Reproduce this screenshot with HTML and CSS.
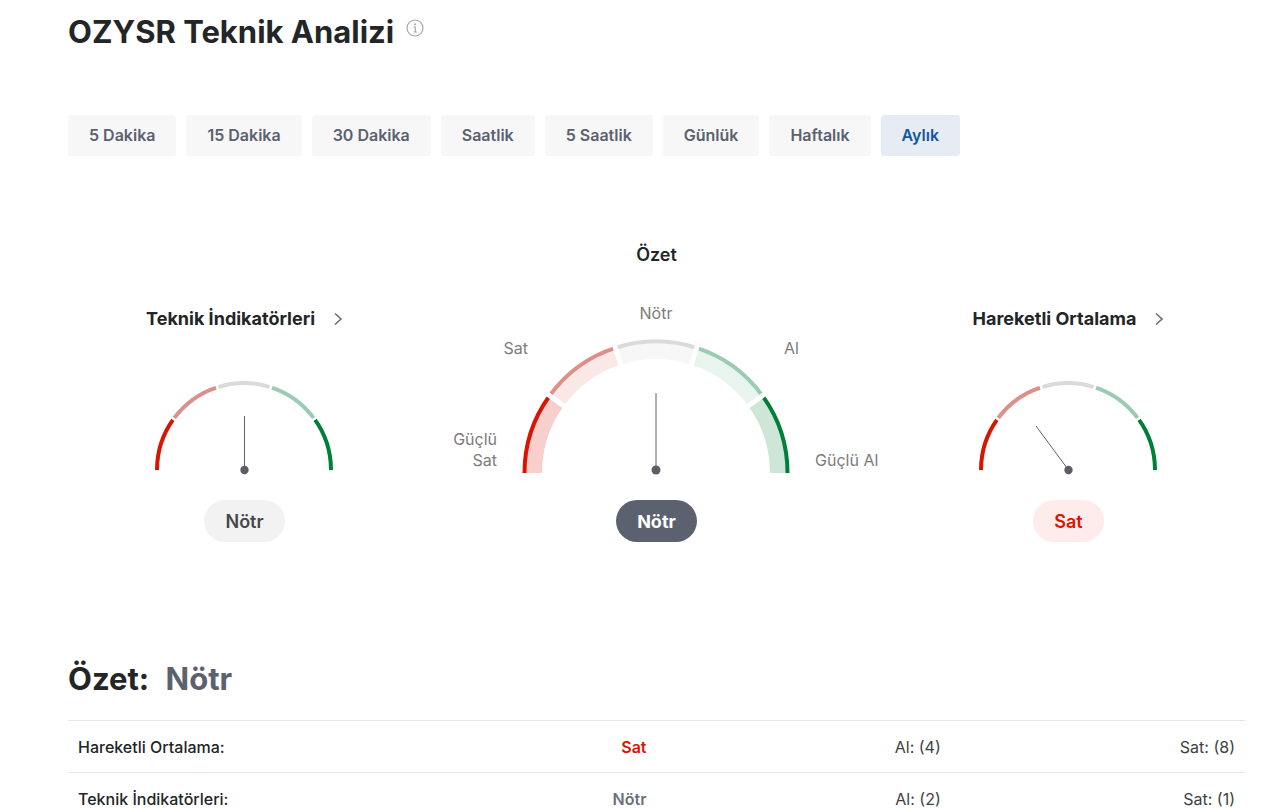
FILE: index.html
```html
<!DOCTYPE html>
<html lang="tr">
<head>
    <meta charset="UTF-8">
    <meta name="viewport" content="width=device-width, initial-scale=1.0">
    <title>OZYSR Teknik Analizi</title>
    <link rel="stylesheet" href="styles.css">
</head>
<body>
    <main class="page">
        <div class="header">
            <h1>OZYSR Teknik Analizi</h1>
            <svg class="info" viewBox="0 0 18 18" aria-hidden="true">
                <circle cx="9" cy="9" r="8" />
                <path d="M7.5 8H9.3V13M7.3 13H11" />
                <circle class="info-dot" cx="9" cy="5.2" r="1" />
            </svg>
        </div>

        <div class="tabs">
            <button type="button">5 Dakika</button>
            <button type="button">15 Dakika</button>
            <button type="button">30 Dakika</button>
            <button type="button">Saatlik</button>
            <button type="button">5 Saatlik</button>
            <button type="button">Günlük</button>
            <button type="button">Haftalık</button>
            <button type="button" class="active">Aylık</button>
        </div>

        <div class="gauges">
            <section class="gauge">
                <a href="#indicators" class="gauge-title">Teknik İndikatörleri
                    <svg class="chevron" viewBox="0 0 10 14" aria-hidden="true"><path d="M2 1.5L8 7L2 12.5" /></svg>
                </a>
                <svg class="dial" viewBox="0 0 181 96" aria-hidden="true">
                    <path class="arc strong-sell" d="M3 90A87 87 0 0 1 19.6 38.9" />
                    <path class="arc sell" d="M19.6 38.9A87 87 0 0 1 63.1 7.3" />
                    <path class="arc neutral" d="M63.1 7.3A87 87 0 0 1 116.9 7.3" />
                    <path class="arc buy" d="M116.9 7.3A87 87 0 0 1 160.4 38.9" />
                    <path class="arc strong-buy" d="M160.4 38.9A87 87 0 0 1 177 90" />
                    <path class="split" d="M25.3 43L15.6 35.9M65.3 13.9L61.6 2.5M114.7 13.9L118.4 2.5M154.7 43L164.4 35.9" />
                    <path class="needle" d="M90.5 90V36" />
                    <circle class="pivot" cx="90.5" cy="90" r="4.2" />
                </svg>
                <span class="pill">Nötr</span>
            </section>

            <section class="gauge">
                <h3 class="gauge-title main-title">Özet</h3>
                <svg class="dial-main" viewBox="-12 0 448 176" aria-hidden="true">
                    <g class="labels">
                        <text x="212" y="19" text-anchor="middle">Nötr</text>
                        <text x="84" y="54" text-anchor="end">Sat</text>
                        <text x="340" y="54">Al</text>
                        <text x="53" y="145" text-anchor="end">Güçlü</text>
                        <text x="53" y="166" text-anchor="end">Sat</text>
                        <text x="371" y="166">Güçlü Al</text>
                    </g>
                    <g transform="translate(78 39)">
                        <!-- wide pale bands -->
                        <path class="band band-strong-sell" d="M12 134A122 122 0 0 1 35.3 62.3" />
                        <path class="band band-sell" d="M35.3 62.3A122 122 0 0 1 96.3 18" />
                        <path class="band band-neutral" d="M96.3 18A122 122 0 0 1 171.7 18" />
                        <path class="band band-buy" d="M171.7 18A122 122 0 0 1 232.7 62.3" />
                        <path class="band band-strong-buy" d="M232.7 62.3A122 122 0 0 1 256 134" />
                        <!-- outer rim -->
                        <path class="arc strong-sell" d="M2.5 134A131.5 131.5 0 0 1 27.6 56.7" />
                        <path class="arc sell" d="M27.6 56.7A131.5 131.5 0 0 1 93.4 8.9" />
                        <path class="arc neutral" d="M93.4 8.9A131.5 131.5 0 0 1 174.6 8.9" />
                        <path class="arc buy" d="M174.6 8.9A131.5 131.5 0 0 1 240.4 56.7" />
                        <path class="arc strong-buy" d="M240.4 56.7A131.5 131.5 0 0 1 265.5 134" />
                        <path class="split" d="M46.6 70.5L24 54.1M100.6 31.3L92 4.7M167.4 31.3L176 4.7M221.4 70.5L244 54.1" />
                        <path class="needle" d="M134 131V54" />
                        <circle class="pivot" cx="134" cy="131" r="4.5" />
                    </g>
                </svg>
                <span class="pill pill-dark">Nötr</span>
            </section>

            <section class="gauge">
                <a href="#averages" class="gauge-title">Hareketli Ortalama
                    <svg class="chevron" viewBox="0 0 10 14" aria-hidden="true"><path d="M2 1.5L8 7L2 12.5" /></svg>
                </a>
                <svg class="dial" viewBox="0 0 181 96" aria-hidden="true">
                    <path class="arc strong-sell" d="M3 90A87 87 0 0 1 19.6 38.9" />
                    <path class="arc sell" d="M19.6 38.9A87 87 0 0 1 63.1 7.3" />
                    <path class="arc neutral" d="M63.1 7.3A87 87 0 0 1 116.9 7.3" />
                    <path class="arc buy" d="M116.9 7.3A87 87 0 0 1 160.4 38.9" />
                    <path class="arc strong-buy" d="M160.4 38.9A87 87 0 0 1 177 90" />
                    <path class="split" d="M25.3 43L15.6 35.9M65.3 13.9L61.6 2.5M114.7 13.9L118.4 2.5M154.7 43L164.4 35.9" />
                    <path class="needle" d="M90.5 90L58 46" />
                    <circle class="pivot" cx="90.5" cy="90" r="4.2" />
                </svg>
                <span class="pill pill-sell">Sat</span>
            </section>
        </div>

        <h2>Özet: <span>Nötr</span></h2>
        <table>
            <tr id="averages">
                <th scope="row">Hareketli Ortalama:</th>
                <td class="red">Sat</td>
                <td>Al: (4)</td>
                <td>Sat: (8)</td>
            </tr>
            <tr id="indicators">
                <th scope="row">Teknik İndikatörleri:</th>
                <td class="gray">Nötr</td>
                <td>Al: (2)</td>
                <td>Sat: (1)</td>
            </tr>
        </table>
    </main>
</body>
</html>
```
FILE: styles.css
```css
html {
    scrollbar-width: none;
}
body {
    margin: 0;
    font-family: Inter, sans-serif;
    background-color: #fff;
    color: #232526;
}
.page {
    padding: 12px 35px 0 68px;
}
.header {
    display: flex;
    align-items: flex-start;
    gap: 12px;
}
h1, h2 {
    margin: 0;
    font-size: 31px;
    line-height: 40px;
    font-weight: 700;
}
.info {
    width: 18px;
    height: 18px;
    margin-top: 7px;
    fill: none;
    stroke: #a8a8a8;
    stroke-width: 1.2;
}
.info-dot {
    fill: #a8a8a8;
    stroke: none;
}

/* Period tabs */
.tabs {
    display: flex;
    flex-wrap: wrap;
    gap: 10px;
    margin-top: 63px;
}
.tabs button {
    height: 41px;
    padding: 0 21px 2px;
    border: none;
    border-radius: 3px;
    background-color: #f7f7f8;
    color: #5b616e;
    font-family: inherit;
    font-size: 16px;
    font-weight: 600;
    cursor: pointer;
}
.tabs .active {
    background-color: #e7ecf4;
    color: #1256a0;
}

/* Gauges */
.gauges {
    display: grid;
    grid-template-columns: 3fr 4fr 3fr;
    align-items: end;
    margin-top: 86px;
}
.gauge {
    display: flex;
    flex-direction: column;
    align-items: center;
}
.gauge-title {
    display: flex;
    align-items: center;
    gap: 18px;
    margin: 0 0 48px;
    font-size: 18px;
    line-height: 26px;
    font-weight: 700;
    color: #232526;
    text-decoration: none;
}
.main-title {
    margin-bottom: 32px;
    font-weight: 600;
}
.chevron {
    width: 10px;
    height: 14px;
    fill: none;
    stroke: #6a6d72;
    stroke-width: 1.6;
}
.dial {
    width: 181px;
    height: 96px;
}
.dial-main {
    width: 448px;
    height: 176px;
}
.labels {
    font-size: 16px;
    fill: #7c7c7c;
}
.arc, .band {
    fill: none;
    stroke-width: 4;
}
.band {
    stroke-width: 16;
}
.strong-sell { stroke: #d91400; }
.sell { stroke: #dd8f8a; }
.neutral { stroke: #dadada; }
.buy { stroke: #9bcbb3; }
.strong-buy { stroke: #007f37; }
.band-strong-sell { stroke: #f8cfcd; }
.band-sell { stroke: #fae8e6; }
.band-neutral { stroke: #f7f7f7; }
.band-buy { stroke: #e8f4ed; }
.band-strong-buy { stroke: #cde6d8; }
.split {
    fill: none;
    stroke: #fff;
    stroke-width: 2.5;
}
.dial-main .split {
    stroke-width: 5;
}
.needle {
    fill: none;
    stroke: #5b616e;
    stroke-width: 1;
}
.pivot {
    fill: #5b5e66;
}
.pill {
    margin-top: 24px;
    padding: 1px 21px 0;
    border-radius: 21px;
    background-color: #f2f2f2;
    color: #45474b;
    font-size: 18px;
    line-height: 41px;
    font-weight: 600;
}
.pill-dark {
    background-color: #5b616e;
    color: #fff;
    font-weight: 700;
}
.pill-sell {
    background-color: #fdeceb;
    color: #d91400;
}

/* Summary table */
h2 {
    margin: 117px 0 21px;
}
h2 span {
    margin-left: 9px;
    color: #5b616e;
}
table {
    width: 100%;
    table-layout: fixed;
    border-collapse: collapse;
    font-size: 16px;
}
th, td {
    height: 51px;
    padding: 0 10px;
    border-top: 1px solid #e6e6e6;
    text-align: right;
    font-weight: 400;
    color: #3d3f42;
}
th {
    text-align: left;
    font-weight: 500;
    color: #232526;
}
.red {
    color: #d91400;
    font-weight: 600;
}
.gray {
    color: #6a707c;
    font-weight: 600;
}
```
